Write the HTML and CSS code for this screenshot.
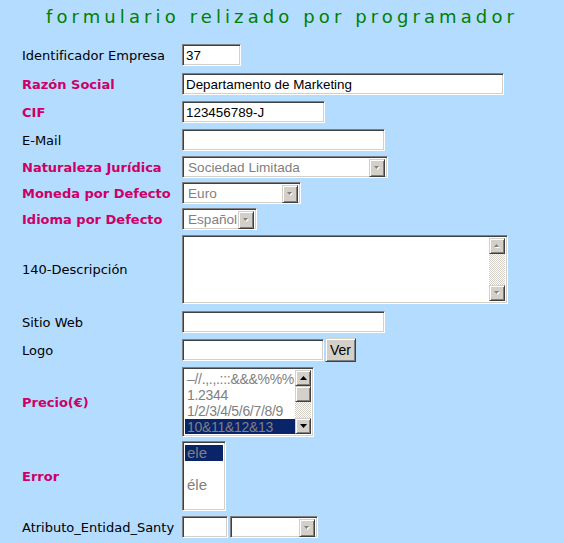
FILE: index.html
```html
<!DOCTYPE html>
<html lang="es">
<head>
<meta charset="utf-8">
<title>formulario</title>
<link rel="stylesheet" href="styles.css">
</head>
<body>
<h1 class="title">formulario relizado por programador</h1>
<div class="form">
  <div class="row">
    <div class="label">Identificador Empresa</div>
    <input class="inset txt w59" type="text" value="37">
  </div>
  <div class="row g7">
    <div class="label req">Razón Social</div>
    <input class="inset txt w322" type="text" value="Departamento de Marketing">
  </div>
  <div class="row g6">
    <div class="label req">CIF</div>
    <input class="inset txt w143" type="text" value="123456789-J">
  </div>
  <div class="row g6">
    <div class="label">E-Mail</div>
    <input class="inset txt w203" type="text" value="">
  </div>
  <div class="row g5">
    <div class="label req">Naturaleza Jurídica</div>
    <div class="inset select w206"><span class="sel-text">Sociedad Limitada</span><span class="btn drop"><svg width="9" height="6" viewBox="0 0 9 6"><path d="M2 2h5l-2.5 3z" fill="#fff"/><path d="M1 1h5L3.5 4z" fill="#808080"/></svg></span></div>
  </div>
  <div class="row g4">
    <div class="label req">Moneda por Defecto</div>
    <div class="inset select w119"><span class="sel-text">Euro</span><span class="btn drop"><svg width="9" height="6" viewBox="0 0 9 6"><path d="M2 2h5l-2.5 3z" fill="#fff"/><path d="M1 1h5L3.5 4z" fill="#808080"/></svg></span></div>
  </div>
  <div class="row g4">
    <div class="label req">Idioma por Defecto</div>
    <div class="inset select w75"><span class="sel-text">Español</span><span class="btn drop"><svg width="9" height="6" viewBox="0 0 9 6"><path d="M2 2h5l-2.5 3z" fill="#fff"/><path d="M1 1h5L3.5 4z" fill="#808080"/></svg></span></div>
  </div>
  <div class="row g5">
    <div class="label">140-Descripción</div>
    <div class="inset area">
      <div class="area-body"></div>
      <div class="vscroll">
        <span class="btn sbtn"><svg width="9" height="6" viewBox="0 0 9 6"><path d="M2 5h5L4.5 2z" fill="#fff"/><path d="M1 4h5L3.5 1z" fill="#808080"/></svg></span>
        <span class="track"></span>
        <span class="btn sbtn"><svg width="9" height="6" viewBox="0 0 9 6"><path d="M2 2h5l-2.5 3z" fill="#fff"/><path d="M1 1h5L3.5 4z" fill="#808080"/></svg></span>
      </div>
    </div>
  </div>
  <div class="row g7">
    <div class="label">Sitio Web</div>
    <input class="inset txt w203" type="text" value="">
  </div>
  <div class="row g5">
    <div class="label">Logo</div>
    <div class="pair">
      <input class="inset txt w142" type="text" value="">
      <span class="btn ver">Ver</span>
    </div>
  </div>
  <div class="row g5">
    <div class="label req">Precio(€)</div>
    <div class="inset listbox w132">
      <div class="items">
        <div class="item">–//.,.,.:::&amp;&amp;&amp;%%%</div>
        <div class="item">1.2344</div>
        <div class="item">1/2/3/4/5/6/7/8/9</div>
        <div class="item sel">10&amp;11&amp;12&amp;13</div>
      </div>
      <div class="vscroll">
        <span class="btn sbtn"><svg width="7" height="4" viewBox="0 0 7 4"><path d="M0 4h7L3.5 0z" fill="#000"/></svg></span>
        <span class="btn sbtn"></span>
        <span class="track"></span>
        <span class="btn sbtn"><svg width="7" height="4" viewBox="0 0 7 4"><path d="M0 0h7L3.5 4z" fill="#000"/></svg></span>
      </div>
    </div>
  </div>
  <div class="row g4">
    <div class="label req">Error</div>
    <div class="inset listbox big w44">
      <div class="items">
        <div class="item sel">ele</div>
        <div class="item">&nbsp;</div>
        <div class="item">éle</div>
      </div>
    </div>
  </div>
  <div class="row g5">
    <div class="label">Atributo_Entidad_Santy</div>
    <div class="pair gap2">
      <input class="inset txt w46" type="text" value="">
      <div class="inset select w88"><span class="sel-text"></span><span class="btn drop"><svg width="9" height="6" viewBox="0 0 9 6"><path d="M2 2h5l-2.5 3z" fill="#fff"/><path d="M1 1h5L3.5 4z" fill="#808080"/></svg></span></div>
    </div>
  </div>
</div>
</body>
</html>
```

FILE: styles.css
```css
html, body {
  margin: 0;
  background: #b4dcff;
}
body {
  font-family: "DejaVu Sans", Verdana, sans-serif;
  font-size: 13px;
  color: #000;
}
.title {
  margin: 0;
  padding-top: 6px;
  text-align: center;
  color: #008000;
  font-size: 18px;
  font-weight: normal;
  line-height: 22px;
  letter-spacing: 4.1px;
}
.form {
  margin-top: 16px;
  padding-left: 22px;
}
.row {
  display: flex;
  align-items: center;
}
.g4 { margin-top: 4px; }
.g5 { margin-top: 5px; }
.g6 { margin-top: 6px; }
.g7 { margin-top: 7px; }
.label {
  width: 160px;
  flex: none;
  line-height: 15px;
}
.label.req {
  color: #cc0066;
  font-weight: bold;
}
.inset {
  box-sizing: border-box;
  background: #fff;
  border: 1px solid;
  border-color: #808080 #fff #fff #808080;
  box-shadow: inset 1px 1px #404040, inset -1px -1px #d4d0c8;
}
.txt {
  height: 22px;
  margin: 0;
  padding: 0 3px;
  font: 13.4px "Liberation Sans", Arial, sans-serif;
  color: #000;
  outline: none;
}
.w44 { width: 44px; }
.w46 { width: 46px; }
.w59 { width: 59px; }
.w75 { width: 75px; }
.w88 { width: 88px; }
.w119 { width: 119px; }
.w132 { width: 132px; }
.w142 { width: 142px; }
.w143 { width: 143px; }
.w203 { width: 203px; }
.w206 { width: 206px; }
.w322 { width: 322px; }
.btn {
  box-sizing: border-box;
  display: flex;
  align-items: center;
  justify-content: center;
  background: #d4d0c8;
  border: 1px solid;
  border-color: #d4d0c8 #404040 #404040 #d4d0c8;
  box-shadow: inset 1px 1px #fff, inset -1px -1px #808080;
}
.select {
  height: 22px;
  display: flex;
  padding: 2px;
  font: 13.6px "Liberation Sans", Arial, sans-serif;
  color: #808080;
}
.sel-text {
  flex: 1;
  padding-left: 3px;
  line-height: 18px;
  overflow: hidden;
  white-space: nowrap;
}
.drop {
  width: 16px;
  height: 18px;
  flex: none;
}
.area {
  width: 326px;
  height: 69px;
  display: flex;
  padding: 2px;
}
.area-body {
  flex: 1;
}
.vscroll {
  width: 16px;
  flex: none;
  display: flex;
  flex-direction: column;
}
.sbtn {
  width: 16px;
  height: 16px;
  flex: none;
}
.track {
  flex: 1;
  background: repeating-conic-gradient(#d4d0c8 0 25%, #fff 0 50%) 0 0 / 2px 2px;
}
.pair {
  display: flex;
  align-items: center;
  gap: 1px;
}
.pair.gap2 {
  gap: 2px;
}
.ver {
  width: 31px;
  height: 24px;
  font: 14px "Liberation Sans", Arial, sans-serif;
  color: #000;
}
.listbox {
  height: 70px;
  display: flex;
  padding: 2px;
  font: 14px "Liberation Sans", Arial, sans-serif;
  letter-spacing: -0.3px;
  color: #808080;
}
.listbox.big {
  font-size: 15px;
  letter-spacing: 0;
}
.items {
  flex: 1;
  min-width: 0;
  overflow: hidden;
  padding-top: 1px;
}
.item {
  height: 16px;
  line-height: 16px;
  padding-left: 2px;
  white-space: nowrap;
}
.item.sel {
  background: #0a246a;
}
```
